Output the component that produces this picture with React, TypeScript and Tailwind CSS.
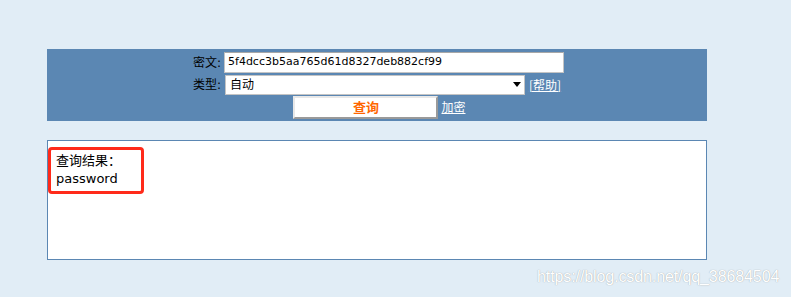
import React from "react";

export default function App() {
  return (
    <div className="relative w-[791px] h-[297px] bg-[#e1edf6] overflow-hidden" style={{ fontFamily: '"DejaVu Sans", "Noto Sans CJK SC", sans-serif' }}>
      <div className="pt-[49px] pl-[47px]">
        <div className="w-[660px] h-[72px] bg-[#5b87b3] flex flex-col items-center pt-[3px] gap-[1px] text-[12px]">
          <div className="flex items-center h-[21px] pl-[3px]">
            <span className="text-black mr-[3px]">密文:</span>
            <div className="w-[340px] h-[21px] bg-white border border-[#c4c4c4] border-t-[#a8a8a8] flex items-center pl-[3px] text-[11px] text-black">
              5f4dcc3b5aa765d61d8327deb882cf99
            </div>
          </div>
          <div className="flex items-center h-[21px]">
            <span className="text-black mr-[4px]">类型:</span>
            <div className="w-[300px] h-[20px] bg-white border border-[#c4c4c4] flex items-center justify-between pl-[4px] pr-[3px] text-black text-[12px]">
              <span>自动</span>
              <svg width="8" height="5" viewBox="0 0 8 5"><path d="M0 0H8L4 5Z" fill="#000" /></svg>
            </div>
            <span className="ml-[4px] text-white underline" style={{ fontFamily: '"Noto Sans CJK SC", sans-serif' }}>[帮助]</span>
          </div>
          <div className="flex items-center h-[23px] pl-[5px]">
            <div className="w-[145px] h-[23px] bg-white border-2 border-t-[#e8e8e8] border-l-[#e8e8e8] border-b-[#9a9a9a] border-r-[#9a9a9a] flex items-center justify-center text-[#ff6600] font-bold text-[13px]">
              查询
            </div>
            <span className="ml-[3px] text-white underline">加密</span>
          </div>
        </div>
        <div className="relative mt-[19px] w-[660px] h-[120px] bg-white border border-[#5b87b3] pl-[8px] pt-[11px] text-[13px] text-black leading-[18px]">
          <div>查询结果：</div>
          <div>password</div>
          <div className="absolute left-0 top-[6px] w-[96px] h-[47px] border-[3px] border-[#ff2a1a] rounded-[4px]" />
        </div>
      </div>
      <div className="absolute left-[537px] top-[265px] text-[16px] text-white tracking-[-0.1px]" style={{ fontFamily: '"Liberation Sans", Arial, sans-serif', textShadow: "0 0 1px rgba(110,110,110,0.7)" }}>
        https://blog.csdn.net/qq_38684504
      </div>
    </div>
  );
}
